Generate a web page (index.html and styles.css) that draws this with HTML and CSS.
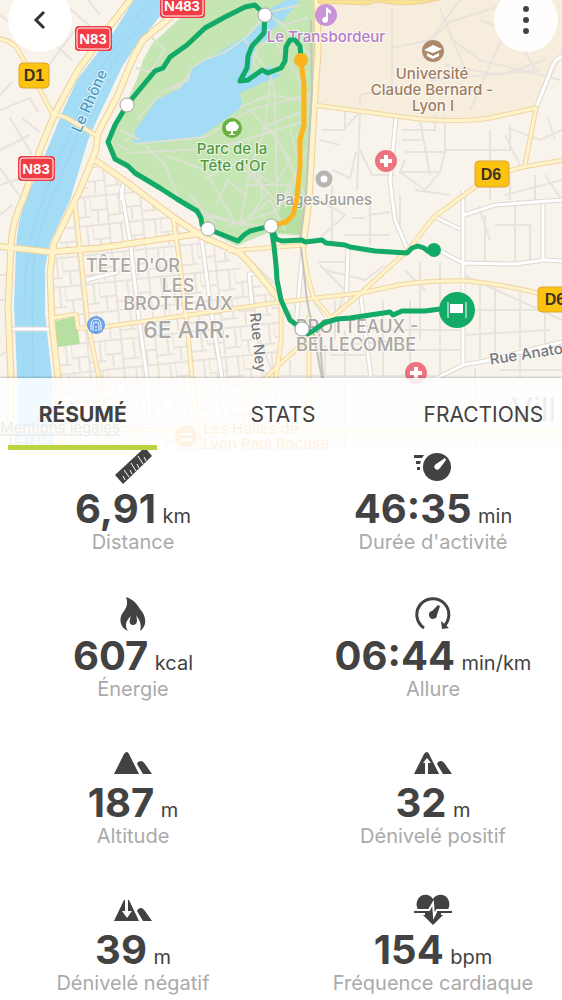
FILE: index.html
```html
<!DOCTYPE html>
<html lang="fr">
<head>
<meta charset="UTF-8">
<meta name="viewport" content="width=device-width, initial-scale=1.0">
<title>Activité</title>
<link rel="stylesheet" href="styles.css">
</head>
<body>

<header class="map-area">
  <svg class="map" viewBox="0 0 562 450" role="img" aria-label="Parcours">
    <defs>
      <pattern id="blocks" width="34" height="29" patternUnits="userSpaceOnUse" patternTransform="rotate(-6)">
        <path class="street" d="M0 2H34M0 16H18M17 22H34M17 0V29M0 0V17M29 2V22M7 16V29"/>
      </pattern>
      <g id="white-roads">
        <path d="M121 188L130 240L139 320L147 378L152 450M201 234L211 310L222 378L228 450M123 185L121 200"/>
        <path d="M396 118L390 180L395 220L408 250M463 190V365M435 217L460 229M464 215L495 205L562 200M543 204V261M440 251L463 263L515 264L545 260L562 261"/>
        <path d="M348 248L346 306M361 297L371 378M303 247L296 325M315 300L330 322M256 274H249L252 305M86 280L118 272"/>
        <path d="M281 378L437 378L463 365L485 361L562 342M536 108L553 65Q556 58 564 56M12 329H50"/>
      </g>
      <g id="small-yellow">
        <path d="M-4 38Q12 40 18 50L35 80L52 113L67 118L97 136"/>
        <path d="M75 203L80 250L88 325L99 378L108 450M173 217L180 265L187 325L192 378L199 450"/>
        <path d="M54 318L76 314L78 328L96 328L140 322L210 312L281 302L361 293L398 285Q435 280 468 281Q500 284 538 293L564 300"/>
        <path d="M228 251L303 245M303 247Q306 275 314 298L331 318M309 315V378L308 450"/>
        <path d="M314 105L396 116Q450 124 490 118L536 108L525 165"/>
        <path d="M564 160L523 167L490 176L460 198L434 217L408 250L361 293L331 318L281 363L250 393M281 302V340L276 378"/>
        <path d="M0 430L562 430"/>
      </g>
      <g id="big-yellow">
        <path d="M133 -4L110 26L77 72L55 113L40 150L24 197Q12 222 11 245L8 307L11 378V450"/>
        <path d="M205 -8Q180 6 167 20L143 40L134 56L117 97L98 133L96 150L80 190L54 243L50 273L52 323L58 378L62 450"/>
        <path d="M95 160L128 183L173 217L203 237L240 253L253 267L281 302"/>
        <path d="M-4 246L50 252L100 248L203 233"/>
        <path d="M317 -4L318 50L314 110L309 200L303 247"/>
      </g>
    </defs>

    <rect class="land" width="562" height="450"/>
    <path class="campus" d="M317 0H562V58L536 108L490 118Q450 124 396 116L314 105Z"/>
    <path class="city" d="M95 165L203 237L281 302V450H55L50 250Z"/>
    <path class="city-fill" d="M95 165L203 237L281 302V450H55L50 250Z"/>

    <!-- side streets -->
    <path class="street" d="M0 95L12 82M0 110L30 98L38 112M22 118L40 132M0 150L30 135M10 118L32 154M0 185L22 178M0 168L26 205M60 0L92 28M72 60L50 40M45 70L75 30M20 30L40 52M0 15L20 30M88 0L100 15M0 215L12 205M0 275H8M0 300H12M0 355L10 350"/>
    <path class="street" d="M392 8V95M392 48L430 40L450 22L520 0M430 40L460 0M440 8L465 70M510 20L470 110M545 60L500 75L445 65M360 105V95L395 88L420 95M430 80L540 70M480 20L515 34L535 70M450 38L480 60L560 80"/>
    <path class="street" d="M322 130H345V112M345 128L360 112L357 190M320 140L340 145M332 170L350 178L356 152M360 150L372 175H395M402 130H435V115M420 120L430 175M402 140H425M445 115V150H510V125M405 152H445L440 172H400M490 130V200M405 160L400 172L425 190L440 172M508 128L540 140L562 130M548 118L555 140M505 195L562 180M510 175V200M415 190L450 195M535 175V205"/>
    <path class="street" d="M318 200L345 215L318 240M332 185V245M345 235H390M370 200V245M368 215L390 212M352 218H365M400 195V235M485 215V262M495 225H530V260M478 205L490 240M515 206V262M420 262V340M440 262V375M405 270L425 290M318 262H345M325 270L365 280L385 265M335 300V340M383 300V378M410 300V372M372 330H460M380 350H460M345 345L400 340M330 355H370M463 275L562 320M480 282V358M495 285V355M520 293V348M545 298V345M463 310H540M463 335L550 330M500 370H562M475 368V450M520 355V378M325 345V375M318 330L322 378M345 330V450"/>
    <path class="street" d="M250 260L281 290M225 252V262M256 330L275 378M290 360V378M290 310L300 350M320 265L345 290L335 320M505 135L520 165M545 175L562 200"/>

    <!-- water and parks -->
    <path class="river" d="M134 0L115 30L77 80L62 113L47 150L27 197Q17 220 16 250L14 305L17 376V450H54L52 378L45 313V267L50 243L70 200L88 140L100 113L122 67L133 50L173 0Z"/>
    <path class="ripple" d="M160 0L118 55L88 110L58 185Q35 230 32 280L33 378M148 0L105 62L75 120L45 195Q25 240 24 300V378"/>
    <path class="park" d="M201 0H316L315 95L310 190L302 236L268 233L248 241L237 246L214 234L197 213L160 191L125 167L110 150L109 140L138 77L143 60L152 44L178 20Z"/>
    <path class="park-dark" d="M55 321L76 316L80 344L57 347Z"/>
    <path class="park-dark" d="M282 205L303 200L300 234L274 232Z"/>
    <path class="lake" d="M133 143L135 130L157 100L182 87L190 70L206 59L217 53L247 35L261 22L271 8L287 0H300L282 22L270 31L269 65L281 76L262 83L240 93L242 107L220 123L200 137L160 143Z"/>
    <path class="park" d="M256 45L269 38L283 47L285 62L265 68L250 74Z"/>
    <path class="trail" d="M134 144L205 137L250 110L315 93M130 153L215 148L245 140L308 120M145 145L165 165L178 198M165 155L205 170L238 228M137 120L152 103L165 90L180 87L190 72M152 38L165 50L150 72L136 68M170 88L188 80L191 68L206 59L225 52L245 38L270 12L300 5M245 40L270 75L275 95L277 200M270 40Q245 54 258 70Q275 78 285 65M268 30L300 80L310 105M270 80L265 128L250 170L275 185L290 160L270 130M308 18L282 25L268 14M278 20L314 60M250 110L278 140L305 195M262 128L300 112M205 178L242 160L268 192L243 225L205 213M215 208L228 180L245 195M250 170L240 225L270 200L285 230M235 160L280 205L306 150M258 160L262 200M228 225L275 212L300 175M290 130L300 165L285 208M190 195L215 225M248 185H290M190 205L200 215L240 223L270 228M120 130L140 140M124 142L134 134M118 144L128 150M240 107L270 95L313 102"/>

    <!-- roads, casing first -->
    <use class="road casing-white" href="#white-roads"/>
    <use class="road fill-white" href="#white-roads"/>
    <use class="road casing-small" href="#small-yellow"/>
    <use class="road casing-big" href="#big-yellow"/>
    <use class="road fill-small" href="#small-yellow"/>
    <use class="road fill-big" href="#big-yellow"/>
    <path class="top-road" d="M318 0H440Q405 8 385 3Q375 1 368 5L318 3Z"/>
    <path class="rail" d="M311 20L312 90L306 195L300 240M301 247L307 300L322 378M319 330L323 378"/>

    <!-- places -->
    <circle class="pin-park" cx="232" cy="128" r="10"/>
    <path class="glyph" d="M231 134V131Q226 132 226 128Q225 125 228 124Q229 121 232 122Q235 120 237 124Q240 126 238 129Q236 132 233 131V134H235V135H229V134Z"/>
    <circle class="pin-music" cx="326" cy="15" r="11"/>
    <path class="glyph" d="M326 7L331 11V14L328 12V19A3 3 0 1 1 326 17Z"/>
    <circle class="pin-school" cx="433" cy="51" r="11"/>
    <path class="glyph" d="M424 50L433 45L442 49L433 53ZM427 53L433 56L439 53V56L433 59L427 56Z"/>
    <g id="hospital">
      <circle class="pin-health" cx="386" cy="161" r="11"/>
      <path class="glyph" d="M384 155H388V159H392V163H388V167H384V163H380V159H384Z"/>
    </g>
    <use href="#hospital" x="30" y="212"/>
    <circle class="pin-place" cx="324" cy="179" r="6"/>
    <circle class="pin-metro" cx="96" cy="325" r="9"/>
    <path class="metro" d="M91 330V324A5 5 0 0 1 101 324V330M93 331V325A3 3 0 0 1 99 325V331M95 327H97M95 330H97"/>
    <circle class="pin-food" cx="186" cy="436" r="11"/>
    <path class="glyph" d="M180 433H192V435H180ZM181 438H191V441H181Z"/>

    <g class="label">
      <text class="park-label" x="232" y="154">Parc de la</text>
      <text class="park-label" x="233" y="171">Tête d'Or</text>
      <text class="music-label" x="326" y="42">Le Transbordeur</text>
      <text class="school-label" x="432" y="79">Université</text>
      <text class="school-label" x="432" y="95">Claude Bernard -</text>
      <text class="school-label" x="433" y="111">Lyon I</text>
      <text class="place-label" x="324" y="205">PagesJaunes</text>
      <text class="area-label" x="133" y="272">TÊTE D'OR</text>
      <text class="area-label" x="178" y="292">LES</text>
      <text class="area-label" x="178" y="310">BROTTEAUX</text>
      <text class="district-label" x="187" y="338">6E ARR.</text>
      <text class="area-label" x="357" y="333">BROTTEAUX -</text>
      <text class="area-label" x="356" y="351">BELLECOMBE</text>
      <text class="river-label" transform="translate(94 103) rotate(-66)">Le Rhône</text>
      <text class="street-label" transform="translate(253 343) rotate(84)">Rue Ney</text>
      <text class="street-label" transform="translate(527 359) rotate(-9)">Rue Anato</text>
      <text class="food-label" x="203" y="434">Les Halles de</text>
      <text class="food-label" x="203" y="449">Lyon Paul Bocuse</text>
      <text class="area-label" x="28" y="449">IERS</text>
      <text class="city-label" x="511" y="421">Vill</text>
    </g>
    <a href="#mentions"><text class="legal" x="0" y="433">Mentions légales</text></a>

    <!-- road numbers -->
    <g class="shield-red">
      <rect x="75" y="26" width="37" height="25" rx="4"/><rect class="inner" x="77" y="28" width="33" height="21" rx="3"/>
      <text x="93" y="44">N83</text>
      <rect x="18" y="156" width="37" height="25" rx="4"/><rect class="inner" x="20" y="158" width="33" height="21" rx="3"/>
      <text x="36" y="174">N83</text>
      <rect x="160" y="-6" width="45" height="24" rx="4"/><rect class="inner" x="162" y="-4" width="41" height="20" rx="3"/>
      <text x="182" y="11">N483</text>
    </g>
    <g class="shield-yellow">
      <rect x="19" y="63" width="30" height="25" rx="4"/>
      <text x="34" y="81">D1</text>
      <rect x="475" y="161" width="34" height="26" rx="4"/>
      <text x="491" y="180">D6</text>
      <rect x="538" y="287" width="34" height="25" rx="4"/>
      <text x="555" y="305">D6</text>
    </g>

    <!-- recorded track -->
    <path class="track" d="M271 226L250 231L244 235L238 241L208 229L202 225L201 218L197 211L187 205L177 199L160 188L135 173L128 166L115 159L108 142L115 125L127 105L140 89L155 71L163 68L170 57L187 45L205 28L225 17L245 7L255 5L265 15L264 33L252 46L248 56L247 68L240 81L248 80L262 70L268 73L281 68L285 61L286 47L290 40L295 40L300 46L301 58"/>
    <path class="track" d="M271 226L276 239L282 241L302 240L305 242L322 240L326 243L345 245L350 247L375 251L407 253L412 248L418 246L424 248L429 252"/>
    <path class="track" d="M271 226L274 246L276 265L277 280L281 300L290 320L302 329L308 334L316 329L324 323L337 319L350 318L390 312L393 315L402 311L425 311L440 309"/>
    <path class="track-paused" d="M301 60L304 85L304 125L300 140L300 165L297 198L293 215L286 222L271 226"/>
    <circle class="stop-paused" cx="301" cy="60" r="7"/>
    <circle class="stop" cx="434" cy="250" r="7"/>
    <g class="marker">
      <circle cx="265" cy="15" r="7"/>
      <circle cx="127" cy="105" r="7"/>
      <circle cx="208" cy="229" r="7"/>
      <circle cx="271" cy="226" r="7"/>
      <circle cx="302" cy="329" r="7"/>
    </g>
    <circle class="stop" cx="457" cy="310" r="18"/>
    <path class="glyph" d="M450 304H463V313H450Z"/>
    <path class="poles" d="M448 302V318M466 302V318"/>
  </svg>

  <div class="map-buttons">
    <button class="round-button" type="button" aria-label="Retour">
      <svg viewBox="0 0 64 64"><path class="chevron" d="M36 24L28 32L36 40"/></svg>
    </button>
    <button class="round-button" type="button" aria-label="Menu">
      <svg viewBox="0 0 64 64"><circle cx="32" cy="21" r="3"/><circle cx="32" cy="32" r="3"/><circle cx="32" cy="43" r="3"/></svg>
    </button>
  </div>

  <nav class="tabs">
    <button class="tab active" type="button">RÉSUMÉ</button>
    <button class="tab" type="button">STATS</button>
    <button class="tab" type="button">FRACTIONS</button>
  </nav>
</header>

<main class="stats">
  <section class="stat">
    <svg class="icon" viewBox="0 0 44 36"><path d="M31 0H36L41 6L12 34L4 25Z"/><path class="cut" d="M14 30L12 26M18 27L13 20M21 24L19 20M25 21L20 13M28 18L26 14M32 14L27 6M35 11L33 7"/></svg>
    <p class="value">6,91 <span class="unit">km</span></p>
    <p class="name">Distance</p>
  </section>
  <section class="stat">
    <svg class="icon" viewBox="0 0 44 36"><circle cx="26" cy="17" r="14"/><path d="M3 5H13L11 8H3ZM5 11H10L9 14H5ZM6 17H9V20H6Z"/><path class="hole" d="M34 8L35 10L29 18A3 3 0 1 1 25 14Z"/></svg>
    <p class="value">46:35 <span class="unit">min</span></p>
    <p class="name">Durée d'activité</p>
  </section>
  <section class="stat">
    <svg class="icon" viewBox="0 0 44 36"><path d="M15 0C24 3 27 9 29 12C36 20 36 29 29 34C31 28 29 24 25 18C27 24 26 28 22 28C18 28 18 24 20 19C14 24 14 30 17 34C9 31 8 22 11 17C14 12 18 9 15 0Z"/></svg>
    <p class="value">607 <span class="unit">kcal</span></p>
    <p class="name">Énergie</p>
  </section>
  <section class="stat">
    <svg class="icon" viewBox="0 0 44 36"><path class="arc" d="M13 31A16 16 0 1 1 32 30"/><path d="M30 24L31 32L38 31ZM27 8L29 9L26 18A4 4 0 1 1 21 14Z"/></svg>
    <p class="value">06:44 <span class="unit">min/km</span></p>
    <p class="name">Allure</p>
  </section>
  <section class="stat">
    <svg class="icon" viewBox="0 0 44 36"><path d="M3 30L13 10Q16 6 18 10L28 30Z"/><path d="M26 20Q27 17 30 17Q32 17 34 20L41 30H32Z"/></svg>
    <p class="value">187 <span class="unit">m</span></p>
    <p class="name">Altitude</p>
  </section>
  <section class="stat">
    <svg class="icon" viewBox="0 0 44 36"><path d="M3 30L13 10Q16 6 18 10L28 30Z"/><path d="M26 20Q27 17 30 17Q32 17 34 20L41 30H32Z"/><path class="hole" d="M14 30V19H12L16 14L20 19H17V30Z"/></svg>
    <p class="value">32 <span class="unit">m</span></p>
    <p class="name">Dénivelé positif</p>
  </section>
  <section class="stat">
    <svg class="icon" viewBox="0 0 44 36"><path d="M3 30L13 9H18L28 30Z"/><path d="M26 20Q27 17 30 17Q32 17 34 20L41 30H32Z"/><path class="hole" d="M14 8H17V20H21L16 27L11 20H14Z"/></svg>
    <p class="value">39 <span class="unit">m</span></p>
    <p class="name">Dénivelé négatif</p>
  </section>
  <section class="stat">
    <svg class="icon" viewBox="0 0 44 36"><path d="M22 8C26 2 34 3 37 8C39 12 39 16 36 20L22 34L8 20C5 16 5 12 7 8C10 3 18 2 22 8Z"/><path class="pulse-gap" d="M3 19H18L22 12L23 25L26 19H41M3 23H14M30 23H41"/><path class="pulse" d="M3 21H18M26 21H41"/></svg>
    <p class="value">154 <span class="unit">bpm</span></p>
    <p class="name">Fréquence cardiaque</p>
  </section>
</main>

</body>
</html>
```

FILE: styles.css
```css
* {
  box-sizing: border-box;
}
body {
  margin: 0;
  background-color: #fff;
  color: #424242;
  font-family: Inter, 'Liberation Sans', sans-serif;
  overflow-x: hidden;
}
button {
  border: none;
  padding: 0;
  font-family: inherit;
  color: inherit;
  cursor: pointer;
}

/* map */
.map-area {
  position: relative;
  overflow: hidden;
}
.map {
  display: block;
  width: 100%;
}
.land { fill: #f8f3eb; }
.campus { fill: #f6eddd; }
.city { fill: #faf5ec; }
.city-fill { fill: url(#blocks); }
.street {
  fill: none;
  stroke: #e8e3dd;
  stroke-width: 2;
}
.river, .lake { fill: #a3dcf4; }
.ripple {
  fill: none;
  stroke: #98d5f0;
  stroke-width: 1;
}
.park { fill: #c5e5b3; }
.park-dark { fill: #b7dfa2; }
.trail {
  fill: none;
  stroke: #dbe2d2;
  stroke-width: 2;
  stroke-linejoin: round;
}
.road {
  fill: none;
  stroke-linejoin: round;
}
.casing-white { stroke: #ddd9d4; stroke-width: 5; }
.fill-white { stroke: #fff; stroke-width: 3; }
.casing-small { stroke: #f2d5a4; stroke-width: 5; }
.fill-small { stroke: #fff3c9; stroke-width: 3; }
.casing-big { stroke: #f0d09a; stroke-width: 7; }
.fill-big { stroke: #fff3c9; stroke-width: 5; }
.top-road {
  fill: #fbe391;
  stroke: #f0d09a;
}
.rail {
  fill: none;
  stroke: #c6c4c0;
  stroke-width: 2;
}
.glyph { fill: #fff; }
.pin-park { fill: #68b044; }
.pin-music { fill: #c994d8; }
.pin-school { fill: #ae8a6d; }
.pin-health { fill: #eb7480; }
.pin-food { fill: #f5b04d; }
.pin-metro { fill: #69a1e8; }
.pin-place {
  fill: #fff;
  stroke: #b7b5b3;
  stroke-width: 5;
}
.metro {
  fill: none;
  stroke: #fff;
  stroke-width: 1;
}
.label text {
  font-size: 15px;
  font-weight: 500;
  text-anchor: middle;
  paint-order: stroke;
  stroke: rgba(255,255,255,0.7);
  stroke-width: 2px;
}
.label .park-label { fill: #4f9b3d; }
.label .music-label { fill: #b57cc8; }
.label .school-label { fill: #a07c60; }
.label .place-label { fill: #a19d9b; }
.label .river-label { fill: #4e9bc5; }
.label .street-label { fill: #77777b; }
.label .food-label {
  fill: #f0a53a;
  text-anchor: start;
}
.label .area-label {
  fill: #aaa7a4;
  font-size: 18px;
}
.label .district-label {
  fill: #aaa7a4;
  font-size: 23px;
}
.label .city-label {
  fill: #8c8c8c;
  font-size: 32px;
  font-weight: normal;
  text-anchor: start;
}
.legal {
  fill: #777;
  font-size: 15px;
  text-decoration: underline;
}
.shield-red rect {
  fill: #f13b45;
}
.shield-red .inner {
  stroke: #fff;
}
.shield-red text, .shield-yellow text {
  font-family: 'Liberation Sans', sans-serif;
  font-size: 15px;
  font-weight: bold;
  text-anchor: middle;
  fill: #fff;
}
.shield-yellow rect {
  fill: #fcc411;
  stroke: #d9a431;
}
.shield-yellow text {
  font-size: 16px;
  fill: #3c3320;
}
.track, .track-paused {
  fill: none;
  stroke: #13aa68;
  stroke-width: 5;
  stroke-linejoin: round;
}
.track-paused { stroke: #fbb31f; }
.stop { fill: #13aa68; }
.stop-paused { fill: #fbb31f; }
.marker circle {
  fill: #fff;
  stroke: #a3a3a3;
}
.poles {
  stroke: #fff;
  stroke-width: 1;
}

/* buttons over the map */
.map-buttons {
  position: absolute;
  top: -12px;
  left: 8px;
  right: 4px;
  display: flex;
  justify-content: space-between;
}
.round-button {
  width: 64px;
  height: 64px;
  border-radius: 50%;
  background-color: rgba(255,255,255,0.93);
}
.round-button svg {
  display: block;
  fill: #424242;
}
.round-button .chevron {
  fill: none;
  stroke: #333;
  stroke-width: 3;
}

/* tabs */
.tabs {
  position: absolute;
  left: 0;
  right: 0;
  bottom: 0;
  display: grid;
  grid-template-columns: repeat(3, 1fr);
  gap: 51px;
  height: 72px;
  padding: 0 4px 0 8px;
  background-color: rgba(255,255,255,0.85);
  box-shadow: 0 -1px 2px rgba(0,0,0,0.2);
}
.tab {
  display: flex;
  align-items: center;
  justify-content: center;
  background: none;
  border-top: 5px solid transparent;
  border-bottom: 5px solid transparent;
  font-size: 21px;
}
.tab.active {
  border-bottom-color: #bad43f;
  font-weight: bold;
}

/* stats */
.stats {
  display: grid;
  grid-template-columns: 1fr 1fr;
  column-gap: 42px;
  row-gap: 45px;
  padding: 0 0 7px 4px;
}
.stat {
  display: flex;
  flex-direction: column;
  align-items: center;
  white-space: nowrap;
}
.icon {
  width: 44px;
  height: 36px;
  fill: #424242;
}
.icon .hole { fill: #fff; }
.icon .cut {
  stroke: #fff;
  stroke-width: 1;
}
.icon .arc {
  fill: none;
  stroke: #424242;
  stroke-width: 3;
}
.icon .pulse-gap {
  fill: none;
  stroke: #fff;
  stroke-width: 2;
}
.icon .pulse {
  stroke: #424242;
  stroke-width: 2;
}
.value {
  margin: 0;
  font-size: 40px;
  line-height: 46px;
  font-weight: bold;
}
.unit {
  margin-left: -3px;
  font-size: 20px;
  line-height: 20px;
  font-weight: normal;
}
.name {
  margin: 0;
  font-size: 20px;
  line-height: 20px;
  color: #aaa;
}
```
